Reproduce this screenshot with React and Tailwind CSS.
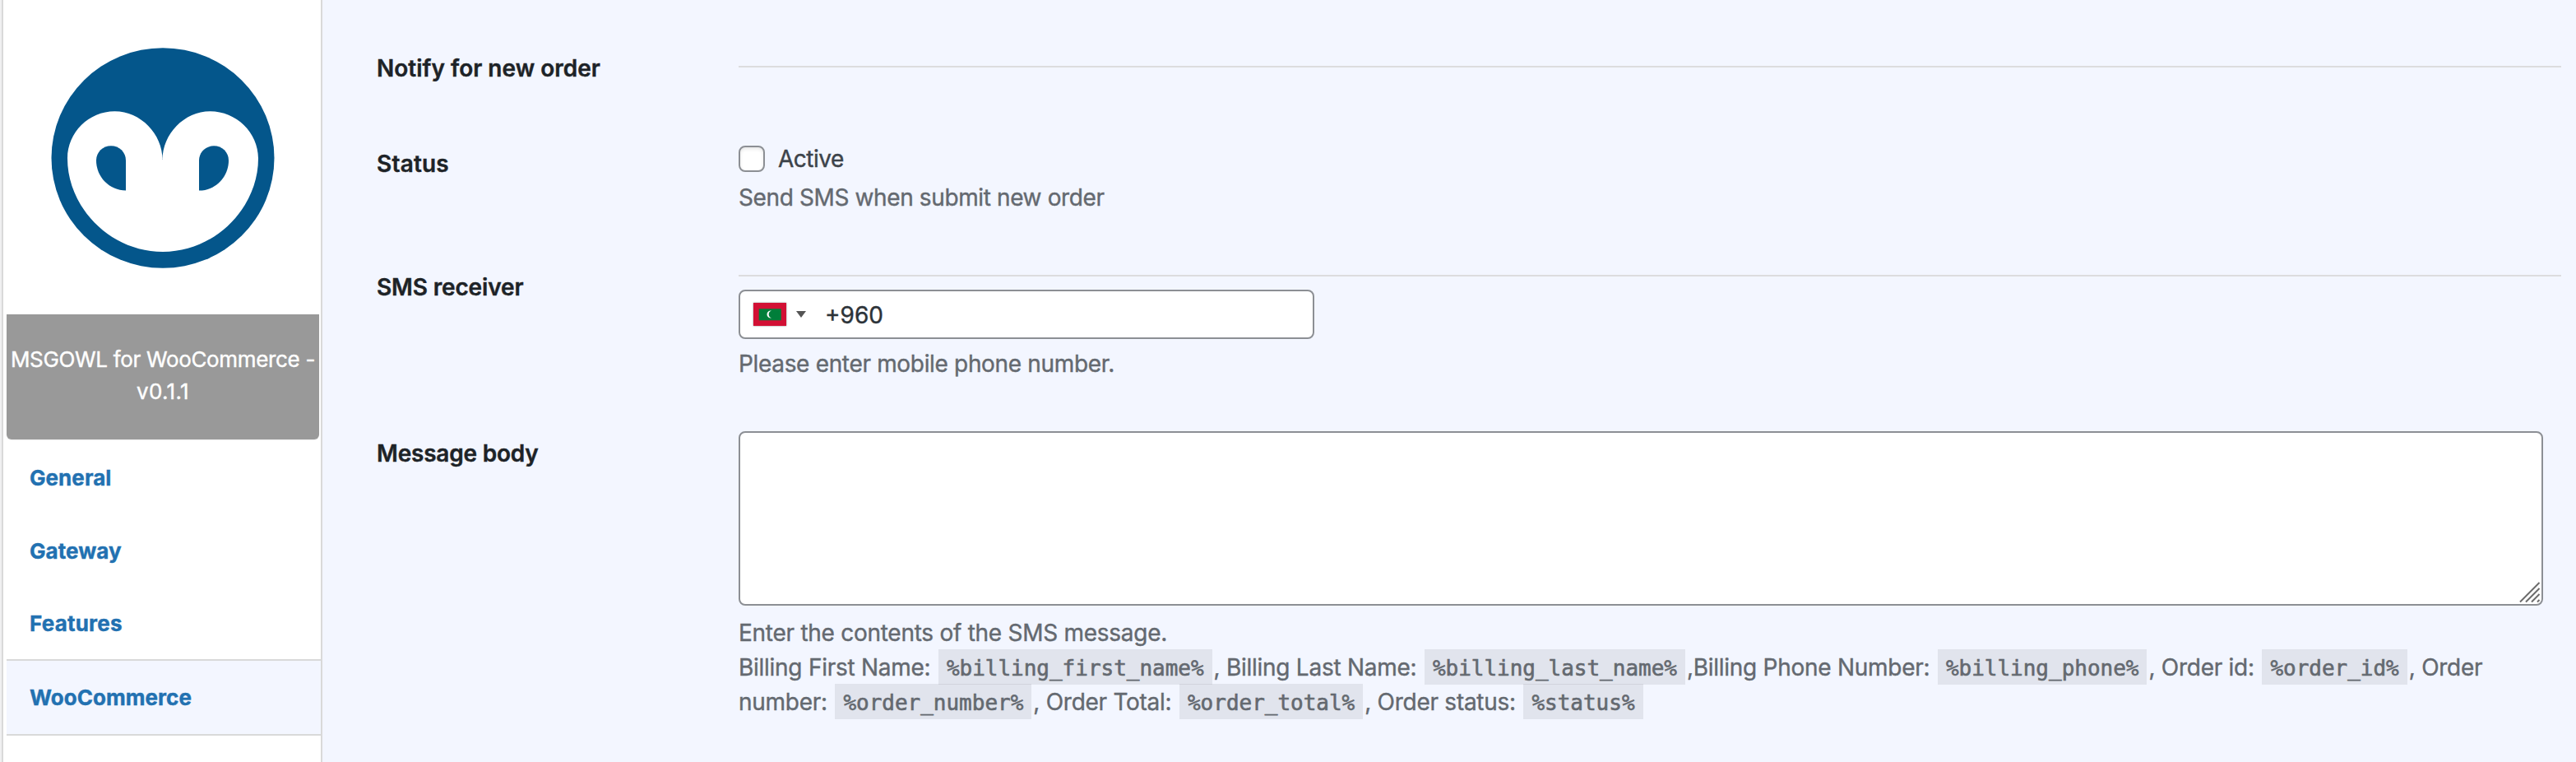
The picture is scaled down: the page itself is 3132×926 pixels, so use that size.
function OwlLogo() {
  return (
    <svg viewBox="0 0 272 268" className="h-[268px] w-[272px]" aria-hidden="true">
      <ellipse cx="136" cy="134" rx="135.5" ry="133.8" fill="#04568b" />
      <path
        d="M20 134.500C20 103 46 77.300 77.500 77.300C109 77.300 135.600 105 135.600 136C135.600 105 162 77.300 193.500 77.300C225 77.300 252 103 252 134.500C252 194 200 248 136 248C72 248 20 194 20 134.500Z"
        fill="#fff"
      />
      <path d="M91 173.500V137C91 127 83 119.300 73 119.300C63 119.300 55 127 55 137C55 157 71 173.500 91 173.500Z" fill="#04568b" />
      <path d="M180 173.500V137C180 127 188 119.300 198 119.300C208 119.300 216 127 216 137C216 157 200 173.500 180 173.500Z" fill="#04568b" />
    </svg>
  );
}

function Code({ children }) {
  return (
    <code className="mx-[2px] bg-black/7 px-[10px] pt-[8px] pb-[5px] font-['DejaVu_Sans_Mono',monospace] text-[26px] leading-none tracking-[-0.02px] [-webkit-text-stroke:0.6px_#646970]">
      {children}
    </code>
  );
}

function Flag() {
  return (
    <svg viewBox="0 0 40 28" className="h-7 w-10 shadow-[0_0_2px_#888]" aria-hidden="true">
      <path d="M0 0h40v28H0z" fill="#d21034" />
      <path d="M6.700 7.300h27v14H6.700z" fill="#007e3a" />
      <path d="M22 9.500A4.600 4.600 0 1 0 22 18.500A4.700 4.700 0 0 1 22 9.500Z" fill="#fff" />
    </svg>
  );
}

export default function App() {
  return (
    <div className="flex h-[926px] w-[3132px] overflow-hidden bg-[#f3f6ff] font-['Inter',sans-serif] text-[28px] tracking-[-0.33px] text-[#646970] [-webkit-text-stroke:0.4px]">
      <aside className="flex h-full w-[392px] shrink-0 flex-col border-r-2 border-[#d9d9d9] bg-white">
        <div className="flex h-full border-l-2 border-[#f0f0f1]">
          <div className="flex w-full flex-col border-l-2 border-[#d9d9d9] pl-1">
            <div className="flex h-[382px] shrink-0 pt-[58px] pl-[54px]">
              <OwlLogo />
            </div>
            <div className="h-[152px] w-[380px] shrink-0 rounded-b-[6px] bg-[#999] pt-[35px] text-center text-[26px] leading-[39px] text-white shadow-[0_1px_1px_rgba(0,0,0,0.08)]">
              <div className="tracking-[-0.33px] whitespace-nowrap">MSGOWL for WooCommerce -</div>
              <div className="tracking-[0.3px]">v0.1.1</div>
            </div>
            <nav className="flex flex-col text-[26px] font-bold tracking-[0.05px] text-[#2271b1]">
              <a className="flex h-[93px] items-center pl-7">General</a>
              <a className="flex h-[85px] items-center pl-7">Gateway</a>
              <a className="flex h-[89px] items-center pt-[2px] pl-7 tracking-[0.2px]">Features</a>
              <a className="flex h-[93px] items-center border-y-2 border-[#d9d9d9] bg-[#f3f6ff] pl-7">WooCommerce</a>
            </nav>
          </div>
        </div>
      </aside>

      <main className="flex flex-col pl-[66px]">
        <section className="flex h-[177px]">
          <h2 className="w-[440px] pt-[62px] leading-[42px] font-semibold tracking-normal text-[#1d2327]">Notify for new order</h2>
          <div className="pt-20">
            <hr className="w-[2216px] border-t-2 border-[#dcdcde]" />
          </div>
        </section>
        <section className="flex h-[157px]">
          <h2 className="w-[440px] pt-px leading-[42px] font-semibold tracking-[0.2px] text-[#1d2327]">Status</h2>
          <div>
            <label className="flex h-8 items-center gap-4 text-[#3c434a]">
              <span className="h-8 w-8 rounded-[8px] border-2 border-[#8c8f94] bg-white shadow-[inset_0_2px_4px_rgba(0,0,0,0.1)]" />
              <span className="tracking-[-0.5px]">Active</span>
            </label>
            <p className="mt-[10px] leading-[42px] tracking-[-0.38px]">Send SMS when submit new order</p>
          </div>
        </section>
        <section className="flex h-[190px]">
          <h2 className="-mt-[6px] w-[440px] leading-[42px] font-semibold tracking-[-0.15px] text-[#1d2327]">SMS receiver</h2>
          <div>
            <hr className="w-[2216px] border-t-2 border-[#dcdcde]" />
            <div className="mt-4 flex h-[60px] w-[700px] items-center rounded-[8px] border-2 border-[#8c8f94] bg-white pl-4 text-[#2c3338]">
              <Flag />
              <svg viewBox="0 0 12 8" className="ml-3 h-2 w-3" aria-hidden="true">
                <path d="M0 0h12L6 8z" fill="#555" />
              </svg>
              <span className="ml-[23px] pt-[2px] tracking-normal">+960</span>
            </div>
            <p className="mt-[9px] leading-[42px]">Please enter mobile phone number.</p>
          </div>
        </section>
        <section className="flex">
          <h2 className="w-[440px] pt-[6px] leading-[42px] font-semibold tracking-[-0.2px] text-[#1d2327]">Message body</h2>
          <div>
            <div className="flex h-[212px] w-[2194px] items-end justify-end rounded-[8px] border-2 border-[#8c8f94] bg-white">
              <svg viewBox="0 0 28 28" className="h-7 w-7" aria-hidden="true">
                <path d="M2 25.500L25.500 2M9 25.500L25.500 9M16 25.500L25.500 16M23 25.500L25.500 23" stroke="#6b6b6b" strokeWidth="2" fill="none" />
              </svg>
            </div>
            <div className="mt-3 leading-[42px] tracking-[-0.27px] whitespace-nowrap">
              <p>Enter the contents of the SMS message.</p>
              <p>
                Billing First Name: <Code>%billing_first_name%</Code>, Billing Last Name: <Code>%billing_last_name%</Code>,Billing Phone
                Number: <Code>%billing_phone%</Code>, Order id: <Code>%order_id%</Code>, Order
              </p>
              <p>
                number: <Code>%order_number%</Code>, Order Total: <Code>%order_total%</Code>, Order status: <Code>%status%</Code>
              </p>
            </div>
          </div>
        </section>
      </main>
    </div>
  );
}
